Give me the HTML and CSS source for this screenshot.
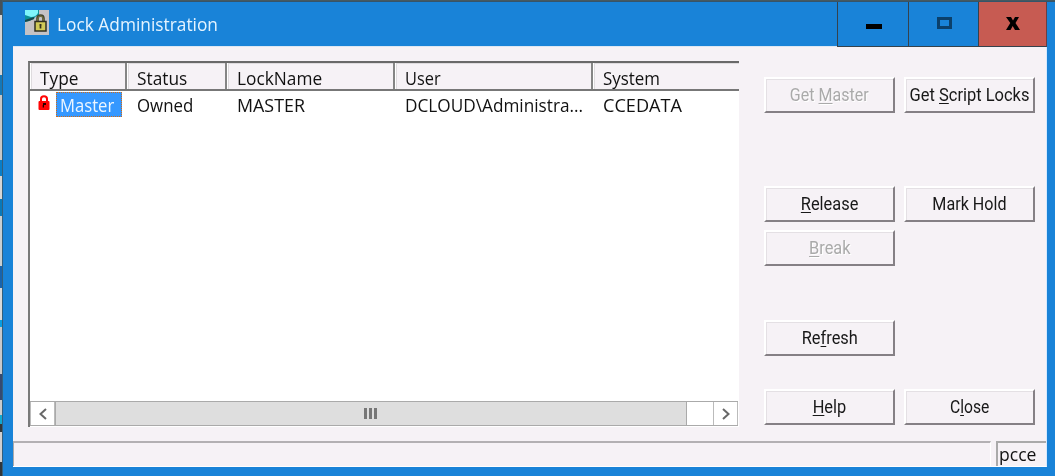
FILE: index.html
```html
<!DOCTYPE html>
<html lang="en">
<head>
<meta charset="utf-8">
<title>Lock Administration</title>
<link rel="stylesheet" href="styles.css">
</head>
<body>
<div class="desktop">
<section class="window">
  <header class="titlebar">
    <svg class="app-icon" width="24" height="25" viewBox="0 0 24 25">
      <rect width="24" height="25" fill="#c5c2c5"/>
      <path d="M0 0H14V5Q10 6 9 9L4 11L0 12Z" fill="#0b9299"/>
      <path d="M0 0H13V3Q11 7 6 7L0 5Z" fill="#7ff5fa"/>
      <path d="M0 10L9 7V9L4 11L0 12Z" fill="#17484b"/>
      <path d="M12.500 12V8.500Q12.500 5.500 15.500 5.500Q18.500 5.500 18.500 8.500V12" fill="none" stroke="#44442f" stroke-width="2.600"/>
      <path d="M12.700 12V8.700Q13 6 15.500 6Q18 6 18.300 8.700V12" fill="none" stroke="#8b873f" stroke-width=".8"/>
      <rect x="10" y="11.500" width="11" height="9.500" fill="#d0c957" stroke="#302f22" stroke-width="1.500"/>
      <path d="M15.500 14V18.500M14.500 15H16.500" stroke="#33301c" stroke-width="1.700"/>
    </svg>
    <h1 class="title">Lock Administration</h1>
    <div class="controls">
      <button class="control minimize" aria-label="Minimize"><svg width="16" height="5"><rect width="16" height="5"/></svg></button>
      <button class="control maximize" aria-label="Maximize"><svg width="15" height="12"><rect x="1.500" y="1.500" width="12" height="9" fill="none" stroke="#0b406b" stroke-width="3"/></svg></button>
      <button class="control exit" aria-label="Close window"><svg width="14" height="13"><path d="M0 0H5L7 3.500L9 0H13L9.500 6L14 13H9L6.700 9L4.500 13H0L4.300 6Z"/></svg></button>
    </div>
  </header>
  <main class="client">
    <div class="content">
      <div class="list">
        <div class="row head">
          <div class="cell"><span class="t-type">Type</span></div><div class="cell"><span class="t-status">Status</span></div><div class="cell"><span class="t-lock">LockName</span></div><div class="cell"><span class="t-user">User</span></div><div class="cell"><span class="t-system">System</span></div>
        </div>
        <div class="row item">
          <div class="cell type-cell">
            <svg class="red-lock" width="12" height="16" viewBox="0 0 12 16"><path d="M3 7V4Q3 1.300 6 1.300Q9 1.300 9 4V7" fill="none" stroke="#ff0505" stroke-width="2"/><rect x=".5" y="6" width="11" height="9" rx="1" fill="#ff0505"/><path d="M5 8H8V10H6V12.500H4.700V10H5Z" fill="#260000"/></svg>
            <div class="selected"><span class="t-master">Master</span></div>
          </div>
          <div class="cell"><span class="t-owned">Owned</span></div><div class="cell"><span class="t-masteruc">MASTER</span></div><div class="cell"><span class="t-account">DCLOUD\Administra...</span></div><div class="cell"><span class="t-data">CCEDATA</span></div>
        </div>
        <div class="space"></div>
        <div class="scrollbar">
          <div class="arrow"><svg width="8" height="12"><path d="M7 1L1.500 6L7 11" fill="none" stroke="#686868" stroke-width="2"/></svg></div>
          <div class="thumb"><i></i><i></i><i></i></div>
          <div class="track"></div>
          <div class="arrow right"><svg width="8" height="12"><path d="M1 1L6.500 6L1 11" fill="none" stroke="#686868" stroke-width="2"/></svg></div>
        </div>
      </div>
      <div class="actions">
        <button class="btn" disabled><span class="b-get">Get <u>M</u>aster</span></button>
        <button class="btn"><span class="b-script">Get <u>S</u>cript Locks</span></button>
        <button class="btn release"><span class="b-release"><u>R</u>elease</span></button>
        <button class="btn hold"><span class="b-hold">Mark Hold</span></button>
        <button class="btn break" disabled><span class="b-break"><u>B</u>reak</span></button>
        <button class="btn refresh"><span class="b-refresh">Re<u>f</u>resh</span></button>
        <button class="btn help"><span class="b-help"><u>H</u>elp</span></button>
        <button class="btn close"><span class="b-close">C<u>l</u>ose</span></button>
      </div>
    </div>
    <footer class="status"><div class="message"></div><div class="server"><span>pcce</span></div></footer>
  </main>
</section>
</div>
</body>
</html>
```
FILE: styles.css
```css
* { box-sizing: border-box; }
body { margin: 0; width: 1055px; height: 476px; overflow: hidden; font-family: "Open Sans", "Noto Sans", sans-serif; font-size: 18.5px; color: #111; }
.desktop { height: 476px; padding: 1px 0 0 2px; background: linear-gradient(90deg, transparent 2px, #465960 2px), linear-gradient(#465158 0 15px, #d5d5d5 15px 75px, #1478b9 75px 95px, #c7c7c7 95px 160px, #087ec9 160px 176px, #d5d5d5 176px 199px, #0879ba 199px 216px, #c8ced1 216px 266px, #1764af 266px 288px, #d9d9d9 288px 320px, #079de1 320px 327px, #c6c8ca 327px 374px, #354a71 374px 400px, #c9cbcc 400px 415px, #11a8d1 415px 424px, #30363a 424px 432px, #cfcfcf 432px 462px, #30363a 462px); }
.window { height: 475px; padding: 0 8px 9px 10px; border-left: 1px solid #345f7b; border-top: 1px solid #365469; background: #1983d8; }
.titlebar { height: 44px; display: flex; align-items: flex-start; padding-left: 12px; }
.app-icon { flex: none; margin-top: 8px; }
.title { margin: 9px 0 0 8px; font-size: 18.5px; line-height: 25px; font-weight: 400; color: #e5f4ff; white-space: nowrap; transform: scaleX(.936); transform-origin: left; }
.controls { margin-left: auto; height: 45px; display: grid; grid-template-columns: 71px 70px 69px; position: relative; }
.control { display: flex; align-items: center; justify-content: center; padding: 0; height: 45px; background: #1983d8; border: 1px solid #34424d; border-top: 0; border-right: 0; color: #000; }
.exit { background: #c75b52; border-right: 1px solid #683f45; }
.minimize svg { margin: 5px 0 0 2px; }
.maximize svg { margin: -2px 0 0 2px; }
.exit svg { margin-top: -2px; }
.client { height: 421px; background: #f6f2f6; border-top: 1px solid #dce7f3; border-right: 1px solid #d5eaff; border-bottom: 1px solid #fff; display: flex; flex-direction: column; }
.content { height: 395px; padding: 14px 12px 0 15px; display: flex; }
.list { width: 711px; height: 366px; background: #fff; border-left: 2px solid #797979; border-top: 2px solid #696969; display: flex; flex-direction: column; }
.row { display: grid; grid-template-columns: 97px 100px 168px 198px 146px; }
.head { height: 28px; background: #f6f2f6; border-bottom: 2px solid #777; }
.head .cell { height: 26px; line-height: 29px; padding-left: 8.5px; border-left: 1px solid #fff; border-right: 2px solid #858585; box-shadow: inset 1px 1px #dedbde; }
.head .cell:last-child { border-right: 0; }
.cell span { display: inline-block; white-space: nowrap; transform-origin: left; transform: scaleX(.935); }
.item { height: 27px; line-height: 27px; }
.item .cell { padding-left: 9.5px; }
.item .type-cell { padding-left: 8px; display: flex; }
.cell .t-master { transform: scaleX(.9); }
.cell .t-owned { transform: scaleX(.91); }
.cell .t-user { transform: scaleX(.885); }
.cell .t-account { transform: scaleX(.93); }
.cell .t-system { transform: scaleX(.915); }
.cell .t-masteruc { transform: scaleX(.965); }
.cell .t-data { transform: scaleX(.98); }
.red-lock { margin: 4px 6px 0 0; flex: none; }
.selected { width: 66px; height: 25px; line-height: 25px; margin-top: 1px; padding-left: 3px; background: #3598ff; color: #edf6ff; border: 1px dotted #d56b13; }
.selected span { display: block; margin-top: -1px; }
.space { flex: 1; }
.scrollbar { height: 25px; width: 708px; display: grid; grid-template-columns: 25px 632px 26px 25px; margin-bottom: 1px; border-top: 1px solid #aaa; border-bottom: 1px solid #aaa; }
.arrow { display: flex; align-items: center; justify-content: center; border-left: 1px solid #bbb; border-right: 1px solid #bbb; }
.thumb { background: #dedede; border-left: 1px solid #aaa; border-right: 1px solid #aaa; display: flex; justify-content: center; align-items: center; gap: 2px; padding-right: 2px; }
.thumb i { width: 3px; height: 11px; background: #777; }
.actions { margin: 16px 0 0 25px; display: grid; grid-template-columns: 131px 131px; column-gap: 9px; grid-template-rows: 36px 73px 36px 8px 36px 54px 36px 33px 36px; height: 348px; }
.btn { height: 36px; padding: 0; display: flex; justify-content: center; align-items: center; background: #f6f2f6; border: 2px solid #fff; border-right-color: #858085; border-bottom-color: #858085; box-shadow: inset 1px 1px #e4e0e4; color: #181818; font: 18px Roboto, sans-serif; }
.btn:disabled { color: #aaa; text-shadow: 1px 1px #fff; }
.btn span { white-space: nowrap; line-height: 22px; transform: scaleX(.91); }
.btn u { text-decoration-thickness: 1px; text-underline-offset: 2px; text-decoration-skip-ink: none; }
.release { grid-area: 3 / 1; }
.hold { grid-area: 3 / 2; }
.break { grid-area: 5 / 1; }
.refresh { grid-area: 7 / 1; }
.help { grid-area: 9 / 1; }
.close { grid-area: 9 / 2; }
.btn .b-script { transform: scaleX(.915); }
.btn .b-get { transform: scaleX(.89); }
.btn .b-hold { transform: scaleX(.895); }
.btn .b-close { transform: scaleX(.87); }
.status { height: 25px; display: flex; gap: 5px; }
.message { width: 978px; border-top: 2px solid #b3b0b3; border-left: 1px solid #aaa; border-right: 1px solid #fff; }
.server { flex: 1; border-top: 2px solid #aaa; border-left: 2px solid #aaa; padding-left: 1px; line-height: 21px; }
.server span { display: inline-block; transform: scaleX(.95); transform-origin: left; }
```
